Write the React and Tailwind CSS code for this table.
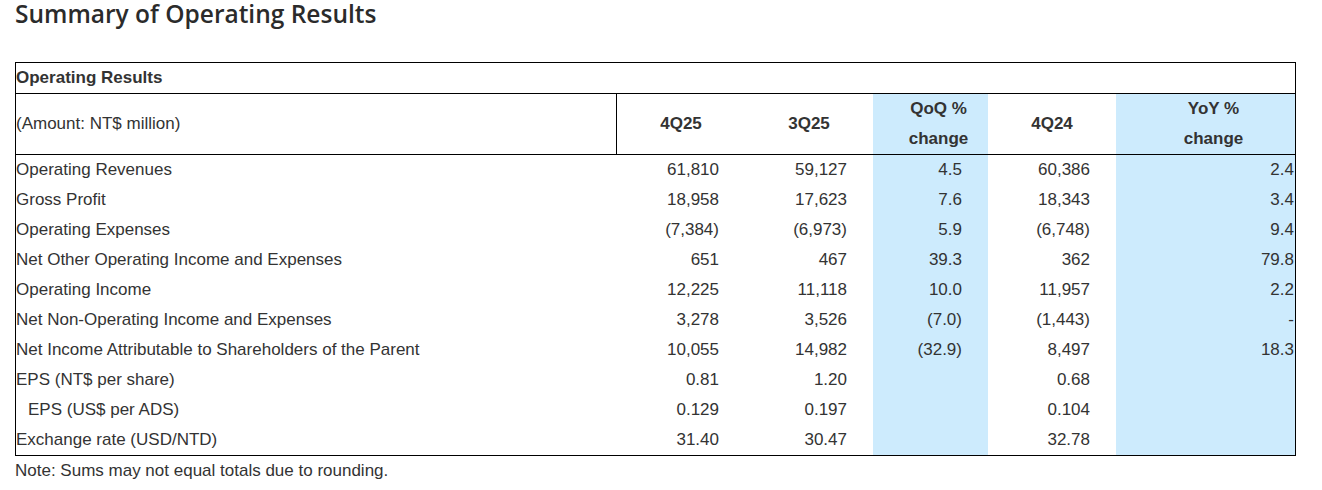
const rows = [
  { label: 'Operating Revenues', v: ['61,810', '59,127', '4.5', '60,386', '2.4'] },
  { label: 'Gross Profit', v: ['18,958', '17,623', '7.6', '18,343', '3.4'] },
  { label: 'Operating Expenses', v: ['(7,384)', '(6,973)', '5.9', '(6,748)', '9.4'] },
  { label: 'Net Other Operating Income and Expenses', v: ['651', '467', '39.3', '362', '79.8'] },
  { label: 'Operating Income', v: ['12,225', '11,118', '10.0', '11,957', '2.2'] },
  { label: 'Net Non-Operating Income and Expenses', v: ['3,278', '3,526', '(7.0)', '(1,443)', '-'] },
  { label: 'Net Income Attributable to Shareholders of the Parent', v: ['10,055', '14,982', '(32.9)', '8,497', '18.3'] },
  { label: 'EPS (NT$ per share)', v: ['0.81', '1.20', '', '0.68', ''] },
  { label: 'EPS (US$ per ADS)', v: ['0.129', '0.197', '', '0.104', ''], indent: true },
  { label: 'Exchange rate (USD/NTD)', v: ['31.40', '30.47', '', '32.78', ''] },
];

const grid = 'grid grid-cols-[601px_128px_128px_115px_128px_179px]';

const App = () => {
  return (
    <div className="px-[15px] pt-[2px] text-[#333] font-['Liberation_Sans',Arial,sans-serif] bg-white min-h-[490px]">
      <h2 className="font-['Open_Sans',sans-serif] font-semibold text-[24.5px] leading-[24px] text-[#2b2b2b]">
        Summary of Operating Results
      </h2>

      <div className="mt-[36px] w-[1281px] border border-black text-[17px]">
        <div className="h-[31px] border-b border-black font-bold leading-[30px]">Operating Results</div>

        <div className={`${grid} h-[61px] border-b border-black`}>
          <div className="border-r border-black flex items-center">(Amount: NT$ million)</div>
          <div className="flex items-center justify-center font-bold">4Q25</div>
          <div className="flex items-center justify-center font-bold">3Q25</div>
          <div className="bg-[#cdebfd] pl-4 text-center leading-[30px] font-bold">
            QoQ %<br />change
          </div>
          <div className="flex items-center justify-center font-bold">4Q24</div>
          <div className="bg-[#cdebfd] pl-4 text-center leading-[30px] font-bold">
            YoY %<br />change
          </div>
        </div>

        {rows.map((row) => (
          <div key={row.label} className={`${grid} h-[30px] leading-[30px]`}>
            <div className={row.indent ? 'pl-3' : ''}>{row.label}</div>
            <div className="text-right pr-[26px]">{row.v[0]}</div>
            <div className="text-right pr-[26px]">{row.v[1]}</div>
            <div className="text-right pr-[26px] bg-[#cdebfd]">{row.v[2]}</div>
            <div className="text-right pr-[26px]">{row.v[3]}</div>
            <div className="text-right pr-[1px] bg-[#cdebfd]">{row.v[4]}</div>
          </div>
        ))}
      </div>

      <p className="text-[17px] leading-[30px]">Note: Sums may not equal totals due to rounding.</p>
    </div>
  );
};

export default App;
